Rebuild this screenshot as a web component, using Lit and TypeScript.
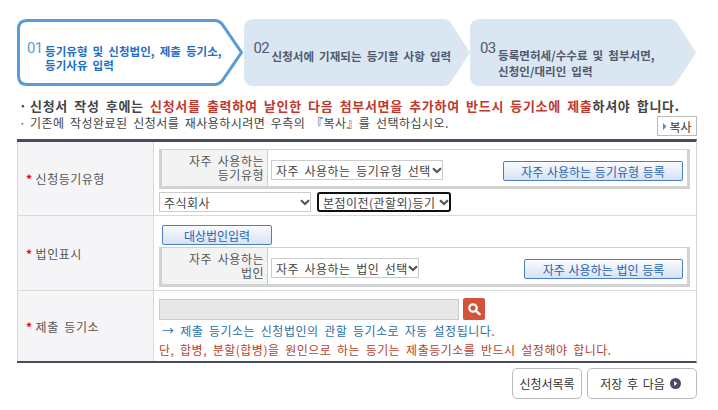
import { LitElement, css, html, svg } from "lit";
import { customElement } from "lit/decorators.js";

const PATH_ON =
  "M10 1.5H198Q202 1.5 205 5L224.5 33.5 205 62Q202 65.5 198 65.5H10Q1.5 65.5 1.5 57V10Q1.5 1.5 10 1.5Z";
const PATH_OFF =
  "M10 0H200Q204 0 207 4L226 33.5 207 63Q204 67 200 67H10Q0 67 0 57V10Q0 0 10 0Z";

@customElement("app-root")
export class AppRoot extends LitElement {
  static styles = css`
    :host {
      display: block;
      width: 718px;
      height: 410px;
      box-sizing: border-box;
      padding: 19px 21px 0 17px;
      font-family: "Noto Sans CJK KR", "Noto Sans", sans-serif;
      font-size: 12px;
      letter-spacing: 0.5px;
      word-spacing: 2.5px;
      color: #444;
      background: #fff;
      overflow: hidden;
    }
    * {
      box-sizing: border-box;
    }
    .steps {
      display: flex;
      height: 67px;
    }
    .step {
      position: relative;
      width: 226.5px;
      flex: none;
      display: flex;
      align-items: center;
      padding-left: 10px;
      color: #4f5a6e;
    }
    .step svg {
      position: absolute;
      left: 0;
      top: 0;
    }
    .step .no,
    .step .txt {
      position: relative;
    }
    .no {
      font-family: "Roboto", sans-serif;
      font-weight: 400;
      font-size: 15px;
      letter-spacing: -0.8px;
      margin-top: -10px;
      width: 18px;
      flex: none;
    }
    .txt {
      font-weight: 700;
      font-size: 11.5px;
      letter-spacing: 0.05px;
      word-spacing: 2.4px;
      line-height: 14px;
      margin-top: 11px;
      white-space: nowrap;
    }
    .step.on {
      color: #1f6fc4;
    }
    .step.on .no {
      color: #5b9bd5;
    }
    .step.two .txt {
      margin-top: 7px;
    }
    .step.three .txt {
      line-height: 16px;
      margin-top: 21px;
    }
    .notice {
      position: relative;
      margin-top: 11px;
      height: 36px;
      padding-left: 2px;
      line-height: 17px;
    }
    .notice div {
      white-space: nowrap;
    }
    .dot {
      display: inline-block;
      width: 11px;
      letter-spacing: 0;
      word-spacing: 0;
    }
    .strong {
      font-size: 13px;
      font-weight: 700;
      letter-spacing: 0.7px;
      word-spacing: 2.6px;
    }
    .strong em {
      color: #c0392f;
      font-style: normal;
    }
    .plain {
      letter-spacing: 0.45px;
    }
    .copy {
      position: absolute;
      right: 0;
      top: 19px;
      width: 40px;
      height: 20px;
      border: 1px solid #bbb;
      background: #fff;
      font: inherit;
      letter-spacing: 0;
      color: #333;
      padding: 0;
      display: flex;
      align-items: center;
      justify-content: center;
      gap: 2px;
    }
    .form {
      border-top: 3px solid #4c4a5f;
      border-bottom: 2px solid #4c4a5f;
      border-right: 1px solid #d4d4d4;
      margin-top: 6px;
    }
    .row {
      display: grid;
      grid-template-columns: 137px 1fr;
      border-bottom: 1px solid #d9d9d9;
    }
    .row:last-child {
      border-bottom: 0;
    }
    .r1 {
      height: 74px;
    }
    .r2 {
      height: 75px;
    }
    .r3 {
      height: 70px;
    }
    .label {
      background: #f5f5f8;
      border-left: 1px solid #d4d4d4;
      border-right: 1px solid #d9d9d9;
      display: flex;
      align-items: center;
      padding-left: 8px;
      color: #555;
    }
    .label i {
      color: #f00;
      font-style: normal;
      font-weight: 700;
      margin-right: 3px;
    }
    .cell {
      padding: 7px 6px 0 5px;
    }
    .inner {
      display: grid;
      grid-template-columns: 106px 1fr;
      border: solid #d2d2d2;
      border-width: 1px 3px 3px 3px;
      height: 40px;
    }
    .th {
      background: #f3f3f3;
      border-right: 1px solid #ccc;
      padding-right: 3px;
      line-height: 14px;
      display: flex;
      align-items: center;
      justify-content: flex-end;
      text-align: right;
      color: #555;
    }
    .td {
      display: flex;
      align-items: center;
      justify-content: space-between;
      padding: 4px 4px 0 3px;
    }
    select {
      appearance: none;
      font: inherit;
      letter-spacing: 0.45px;
      word-spacing: inherit;
      color: #444;
      height: 20px;
      border: 1px solid #ccc;
      border-radius: 0;
      background: #fff
        url("data:image/svg+xml,%3Csvg xmlns='http://www.w3.org/2000/svg' width='10' height='7'%3E%3Cpath d='M1 1.2L5 5 9 1.2' fill='none' stroke='%23555' stroke-width='2.2'/%3E%3C/svg%3E")
        no-repeat right 0 center;
      padding: 0 9px 0 4px;
      outline: none;
    }
    .sel-wide {
      width: 172px;
    }
    .sel-corp {
      width: 148px;
    }
    .sel-kind {
      width: 152px;
    }
    .sel-focus {
      width: 134px;
      border: 2px solid #111;
      border-radius: 3px;
    }
    .blue {
      height: 20px;
      border: 1px solid #4a7fc4;
      border-radius: 2px;
      background: linear-gradient(#fafcfe, #d6e2f2);
      color: #2a62ad;
      font: inherit;
      letter-spacing: 0;
      word-spacing: 1px;
      padding: 0;
      white-space: nowrap;
    }
    .td .blue {
      margin-top: 2px;
    }
    .btn-kind {
      width: 180px;
    }
    .btn-corp {
      width: 159px;
    }
    .btn-target {
      display: block;
      width: 110px;
      margin: 2px 0 2px 3px;
    }
    .selects {
      display: flex;
      gap: 6px;
      margin-top: 3px;
    }
    .input-row {
      display: flex;
      align-items: flex-end;
      gap: 4px;
    }
    .fake-input {
      width: 300px;
      height: 21px;
      background: #e7e7e7;
      border: 1px solid #ccc;
    }
    .search {
      width: 22px;
      height: 22px;
      border: 0;
      border-radius: 2px;
      background: #d2523a;
      padding: 0;
      display: flex;
      align-items: center;
      justify-content: center;
    }
    .note {
      line-height: 19px;
      white-space: nowrap;
    }
    .note.b {
      color: #2b6ea8;
      margin-top: 1px;
      padding-left: 3px;
    }
    .note.r {
      color: #b8412d;
    }
    .actions {
      display: flex;
      justify-content: flex-end;
      gap: 5px;
      margin-top: 5px;
    }
    .actions button {
      height: 31px;
      border: 1px solid #bbb;
      border-radius: 5px;
      background: #fff;
      font: inherit;
      letter-spacing: 0;
      color: #333;
      padding: 0;
      display: flex;
      align-items: center;
      justify-content: center;
      gap: 5px;
    }
    .actions .list {
      width: 70px;
    }
    .actions .next {
      width: 110px;
      word-spacing: 2px;
      padding-right: 3px;
    }
  `;

  private step(cls: string, no: string, lines: string[], on = false) {
    return html`<div class="step ${cls} ${on ? "on" : ""}">
      <svg width="227" height="67" viewBox="0 0 227 67">
        ${on
          ? svg`<path d=${PATH_ON} fill="#fff" stroke="#5b9bd5" stroke-width="3" />`
          : svg`<path d=${PATH_OFF} fill="#dae6f2" />`}
      </svg>
      <span class="no">${no}</span>
      <span class="txt">${lines.map((l) => html`${l}<br />`)}</span>
    </div>`;
  }

  render() {
    return html`
      <div class="steps">
        ${this.step("one", "01", ["등기유형 및 신청법인, 제출 등기소,", "등기사유 입력"], true)}
        ${this.step("two", "02", ["신청서에 기재되는 등기할 사항 입력"])}
        ${this.step("three", "03", ["등록면허세/수수료 및 첨부서면,", "신청인/대리인 입력"])}
      </div>

      <div class="notice">
        <div class="strong">
          <span class="dot">·</span>신청서 작성 후에는
          <em>신청서를 출력하여 날인한 다음 첨부서면을 추가하여 반드시 등기소에 제출</em>하셔야 합니다.
        </div>
        <div class="plain">
          <span class="dot">·</span>기존에 작성완료된 신청서를 재사용하시려면 우측의 『복사』를 선택하십시오.
        </div>
        <button class="copy">
          <svg width="5" height="7" viewBox="0 0 5 7"><path d="M1 0L4.5 3.5 1 7Z" fill="#4a90d0" /></svg>복사
        </button>
      </div>

      <div class="form">
        <div class="row r1">
          <div class="label"><i>*</i>신청등기유형</div>
          <div class="cell">
            <div class="inner">
              <div class="th">자주 사용하는<br />등기유형</div>
              <div class="td">
                <select class="sel-wide"><option>자주 사용하는 등기유형 선택</option></select>
                <button class="blue btn-kind">자주 사용하는 등기유형 등록</button>
              </div>
            </div>
            <div class="selects">
              <select class="sel-kind"><option>주식회사</option></select>
              <select class="sel-focus"><option>본점이전(관할외)등기</option></select>
            </div>
          </div>
        </div>

        <div class="row r2">
          <div class="label"><i>*</i>법인표시</div>
          <div class="cell">
            <button class="blue btn-target">대상법인입력</button>
            <div class="inner">
              <div class="th">자주 사용하는<br />법인</div>
              <div class="td">
                <select class="sel-corp"><option>자주 사용하는 법인 선택</option></select>
                <button class="blue btn-corp">자주 사용하는 법인 등록</button>
              </div>
            </div>
          </div>
        </div>

        <div class="row r3">
          <div class="label"><i>*</i>제출 등기소</div>
          <div class="cell">
            <div class="input-row">
              <div class="fake-input"></div>
              <button class="search" aria-label="검색">
                <svg width="14" height="14" viewBox="0 0 14 14" fill="none" stroke="#fff">
                  <circle cx="6" cy="6" r="3.7" stroke-width="2.2" />
                  <path d="M8.8 8.8L12.6 12.2" stroke-width="2.4" stroke-linecap="round" />
                </svg>
              </button>
            </div>
            <div class="note b">→ 제출 등기소는 신청법인의 관할 등기소로 자동 설정됩니다.</div>
            <div class="note r">단, 합병, 분할(합병)을 원인으로 하는 등기는 제출등기소를 반드시 설정해야 합니다.</div>
          </div>
        </div>
      </div>

      <div class="actions">
        <button class="list">신청서목록</button>
        <button class="next">
          저장 후 다음
          <svg width="11" height="11" viewBox="0 0 11 11">
            <circle cx="5.5" cy="5.5" r="5.5" fill="#4c4a5f" />
            <path d="M4.2 3L7.2 5.5 4.2 8Z" fill="#fff" />
          </svg>
        </button>
      </div>
    `;
  }
}
